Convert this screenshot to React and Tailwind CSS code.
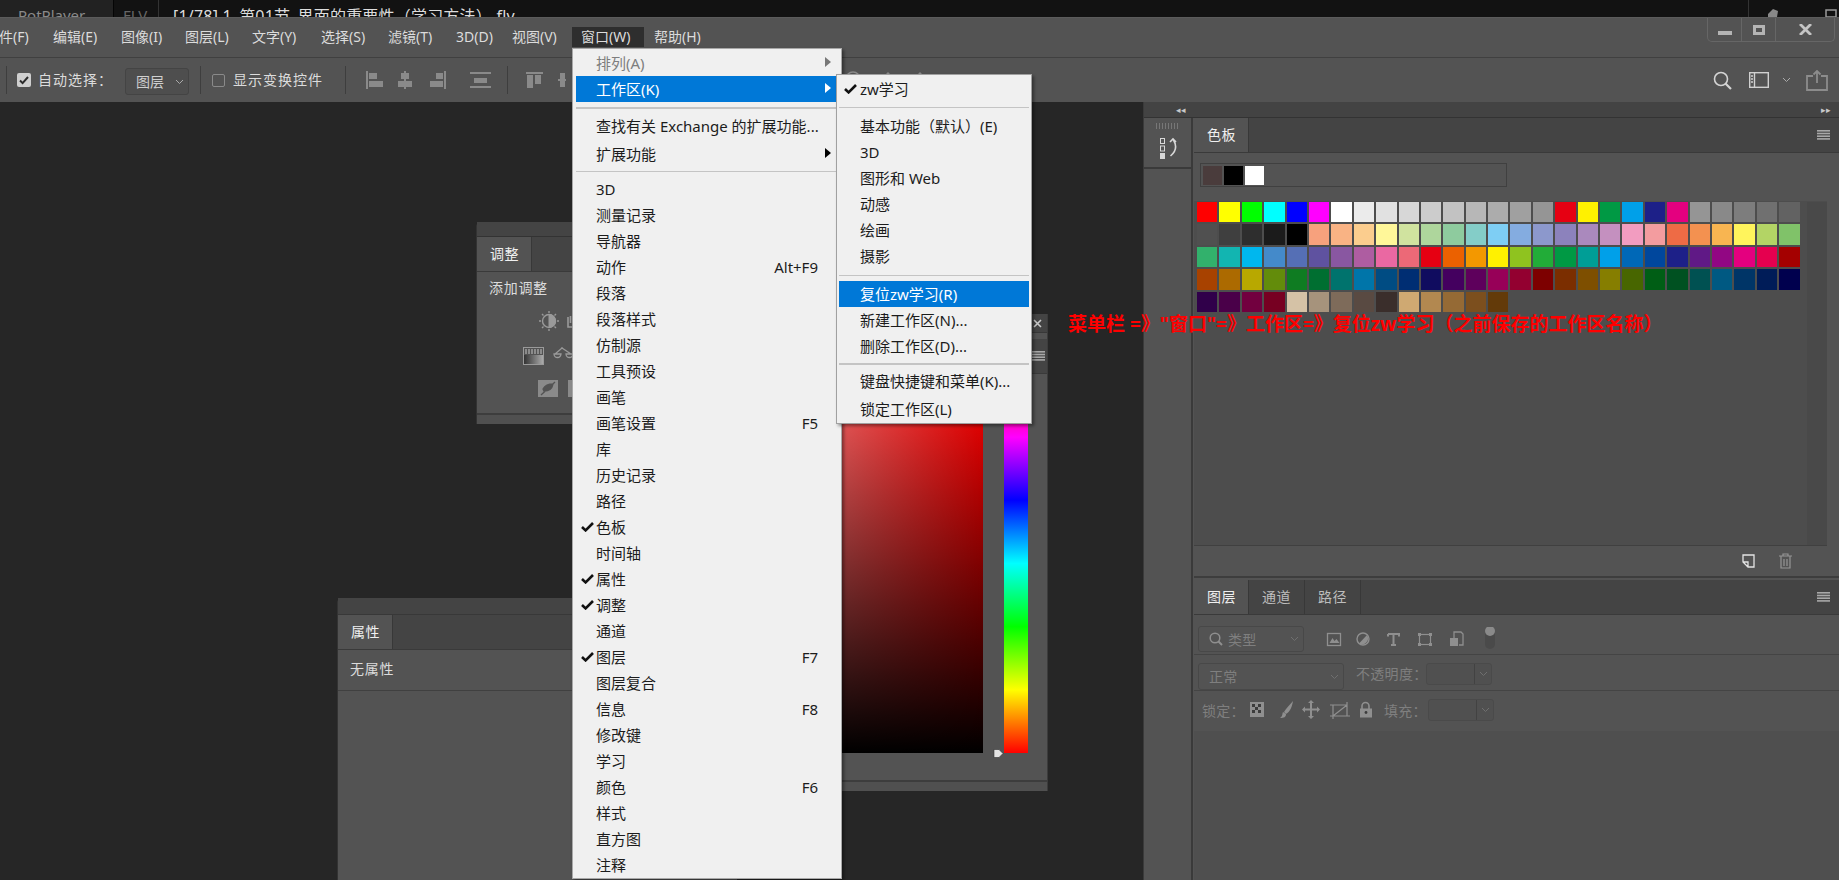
import React from "react";

const menuBar = [
  ["文件(F)", "w-[68px]"], ["编辑(E)", "w-[68px]"], ["图像(I)", "w-[64px]"], ["图层(L)", "w-[67px]"], ["文字(Y)", "w-[69px]"],
  ["选择(S)", "w-[67px]"], ["滤镜(T)", "w-[68px]"], ["3D(D)", "w-[56px]"], ["视图(V)", "w-[60px]"],
];

const swatches = [
  "#ff0000 #ffff00 #00ff00 #00ffff #0000ff #ff00ff #ffffff #ebebeb #e1e1e1 #d7d7d7 #cccccc #c2c2c2 #b7b7b7 #acacac #a0a0a0 #959595 #e60012 #fff100 #009944 #00a0e9 #1d2088 #e4007f #959595 #898989 #7d7d7d #707070 #626262",
  "#505050 #3f3f3f #2e2e2e #1b1b1b #000000 #f7a17d #f9b384 #fbcd8e #fff799 #d0e39f #aed69c #8ecb9e #84cdc8 #7ecef4 #84ace0 #8c98cc #8c82bc #aa89bd #c490bf #f29cc0 #f39c9f #ee6b45 #f39150 #f8b551 #fff45c #b3d465 #80c269",
  "#32b16c #12b5b1 #00b7ee #448aca #556fb5 #5f52a0 #8957a1 #ae5da1 #ea68a2 #ec6977 #e60012 #eb6100 #f39800 #fff100 #8fc31f #22ac38 #009944 #009e96 #00a0e9 #0068b7 #00479d #1d2088 #601986 #920783 #e4007f #e5004f #a40000",
  "#a84200 #ac6a00 #b8a800 #638c0b #0f7c22 #006f31 #00736d #0075a9 #004c83 #002e73 #100c5f #44005f #5e005c #970058 #930030 #7d0000 #7b2e00 #7e4f00 #867e00 #486600 #005e15 #005121 #005152 #005982 #003567 #001c58 #00004e",
  "#30004a #4a0049 #72003f #770022 #d5c2a6 #a6937c #7e6b5a #594a42 #3a2e2b #cfa972 #b28850 #956a35 #7c4f1e #633a09",
];

const Bars = ({ className = "" }) => (
  <svg width="13" height="10" viewBox="0 0 13 10" className={className} fill="#a8a8a8">
    <rect y="0" width="13" height="1.6" /><rect y="2.7" width="13" height="1.6" /><rect y="5.4" width="13" height="1.6" /><rect y="8.1" width="13" height="1.6" />
  </svg>
);

const Chevron = ({ className = "", color = "#aaa" }) => (
  <svg width="9" height="6" viewBox="0 0 9 6" className={className} fill="none" stroke={color}><path d="M1 1l3.5 3.5L8 1" /></svg>
);

const Check = ({ className = "" }) => (
  <svg width="13" height="10" viewBox="0 0 13 10" className={className} fill="none" stroke="#111" strokeWidth="2.6"><path d="M1 5l3.6 3.4L12 1" /></svg>
);

const Tab = ({ children, active, w = "w-[55px]" }) => (
  <div className={`${w} h-full flex items-center pl-[13px] pb-[1px] text-[14px] tracking-[0.5px] border-r border-[#383838] ${active ? "bg-[#535353] text-[#f0f0f0]" : "bg-[#444444] text-[#bdbdbd]"}`}>{children}</div>
);

const Row = ({ label, shortcut, check, arrow, active, disabled, pad = "pl-[20px]" }) => (
  <div className={`relative h-[26px] flex items-center ${pad} pr-[20px] text-[15px] leading-[26px] ${active ? "bg-[#0078d7] text-white" : disabled ? "text-[#7e7e7e]" : "text-[#1c1c1c]"}`}>
    {check && <Check className="absolute left-[5px] top-[8px]" />}
    <span className="whitespace-nowrap">{label}</span>
    {shortcut && <span className="ml-auto">{shortcut}</span>}
    {arrow && <span className={`absolute right-[7px] top-[7px] w-0 h-0 border-y-[5.5px] border-y-transparent border-l-[6px] ${active ? "border-l-white" : disabled ? "border-l-[#777]" : "border-l-black"}`} />}
  </div>
);

const Sep = ({ h = "h-[12px]", line = "h-[1px]" }) => (
  <div className={`${h} flex items-center`}><div className={`w-full ${line} bg-[#c4c4c4]`} /></div>
);

const winItems = [
  ["3D"], ["测量记录"], ["导航器"], ["动作", "Alt+F9"], ["段落"], ["段落样式"], ["仿制源"], ["工具预设"], ["画笔"], ["画笔设置", "F5"], ["库"], ["历史记录"], ["路径"],
  ["色板", null, true], ["时间轴"], ["属性", null, true], ["调整", null, true], ["通道"], ["图层", "F7", true], ["图层复合"], ["信息", "F8"], ["修改键"], ["学习"], ["颜色", "F6"], ["样式"], ["直方图"], ["注释"],
];

const AlignIcons = () => (
  <svg width="570" height="22" viewBox="0 0 570 22" fill="#8a8a8a" className="shrink-0">
    <rect x="0" y="2" width="2" height="18" /><rect x="3" y="4" width="8" height="6" /><rect x="3" y="12" width="14" height="6" />
    <rect x="38" y="2" width="2" height="18" /><rect x="35" y="4" width="8" height="6" /><rect x="32" y="12" width="14" height="6" />
    <rect x="78" y="2" width="2" height="18" /><rect x="70" y="4" width="7" height="6" /><rect x="64" y="12" width="13" height="6" />
    <rect x="104" y="3" width="21" height="2" /><rect x="108" y="9" width="13" height="5" /><rect x="104" y="17" width="21" height="2" />
    <rect x="160" y="3" width="17" height="2" /><rect x="161" y="6" width="6" height="13" /><rect x="169" y="6" width="6" height="9" />
    <rect x="192" y="10" width="8" height="2" /><rect x="194" y="4" width="5" height="14" />
    <circle cx="487" cy="10" r="7" fill="none" stroke="#8a8a8a" strokeWidth="1.5" />
    <path d="M522 3l3 3v10h-6V6z" /><path d="M554 3l3 3v10h-6V6z" />
  </svg>
);

const AdjustIcons = () => (
  <div className="absolute left-[60px] top-[89px] w-[100px] h-[90px]">
    <svg width="100" height="90" viewBox="0 0 100 90" fill="none" stroke="#9a9a9a" className="overflow-visible">
      <defs>
        <linearGradient id="blk" x1="0" x2="1" y1="0" y2="0"><stop offset="0" stopColor="#333" /><stop offset="1" stopColor="#aaa" /></linearGradient>
      </defs>
      <circle cx="12" cy="10" r="6.5" strokeWidth="1.4" />
      <path d="M12 3.5a6.5 6.5 0 010 13z" fill="#9a9a9a" />
      <path d="M12 0v2M12 18v2M2 10h2M20 10h2M5 3l1.5 1.5M19 3l-1.5 1.5M5 17l1.5-1.5M19 17l-1.5-1.5" strokeWidth="1.4" />
      <path d="M31 6v10h8V8h-1.5v4M33.5 5v7M36 5v7" strokeWidth="1.6" />
      <rect x="-13.5" y="36.5" width="20" height="17" strokeWidth="1" />
      <rect x="-13" y="44" width="19" height="9" fill="url(#blk)" stroke="none" />
      <path d="M-11 38v5M-8 38v5M-5 38v5M-2 38v5M1 38v5M4 38v5" strokeWidth="1.6" />
      <path d="M18 43l7-6 9 6M25 36v1M17 43a3.5 3.5 0 007 0zM29 43a3.5 3.5 0 007 0z" strokeWidth="1.3" />
      <rect x="1" y="69" width="20" height="17" fill="#8a8a8a" stroke="none" />
      <path d="M4 84L18 71M6 78c3-5 7-5 10-5-1 5-4 7-9 7z" stroke="#535353" strokeWidth="1.3" fill="#535353" />
      <rect x="31" y="69" width="10" height="17" fill="#8a8a8a" stroke="none" />
    </svg>
  </div>
);

const LayerIcons = () => (
  <svg width="170" height="24" viewBox="0 0 170 24" fill="none" stroke="#8f8f8f" className="shrink-0">
    <rect x="1.5" y="6.5" width="13" height="12" strokeWidth="1.3" />
    <path d="M3.5 16l3-5 2 3 2-2 3 4z" fill="#8f8f8f" stroke="none" />
    <circle cx="37" cy="12" r="6" strokeWidth="1.4" />
    <path d="M33 16.5L41 8a6 6 0 01-8 8.5z" fill="#8f8f8f" stroke="none" />
    <path d="M62 7h11v2.5M67.5 7v11M65 18h5M62 9.5V7" strokeWidth="2" />
    <rect x="93.5" y="7.5" width="11" height="10" strokeWidth="1.2" />
    <path d="M92 6h3v3h-3zM103 6h3v3h-3zM92 16h3v3h-3zM103 16h3v3h-3z" fill="#8f8f8f" stroke="none" />
    <path d="M128 11V5h7l2 2v11h-4" strokeWidth="1.3" />
    <rect x="124" y="11" width="8" height="8" fill="#8f8f8f" stroke="none" />
    <rect x="159" y="0" width="10" height="22" rx="5" fill="#4a4a4a" stroke="none" />
    <circle cx="164" cy="4" r="5" fill="#8a8a8a" stroke="none" />
  </svg>
);

const LockIcons = () => (
  <svg width="126" height="20" viewBox="0 0 126 20" fill="none" stroke="#8f8f8f" className="shrink-0">
    <rect x="1" y="2" width="14" height="15" fill="#8f8f8f" stroke="none" />
    <path d="M3 4h3v3H3zM9 4h3v3H9zM6 7h3v3H6zM3 10h3v3H3zM9 10h3v3H9z" fill="#3c3c3c" stroke="none" />
    <path d="M44 1c-3 4-7 7-9 11l2 2c4-2 6-7 7-13z" fill="#8f8f8f" stroke="none" />
    <path d="M34 12c-1 2 0 4-3 6 4 0 6-1 6-4z" fill="#8f8f8f" stroke="none" />
    <path d="M62 2v15M54.5 9.5h15" strokeWidth="2" />
    <path d="M62 0l3 3h-6zM62 19l3-3h-6zM53 9.5l3-3v6zM71 9.5l-3-3v6z" fill="#8f8f8f" stroke="none" />
    <path d="M84 5h14v11H84zM98 5l-14 11M81 5h3M81 16h3M98 2v3M98 16h3M84 16v3" strokeWidth="1.2" />
    <path d="M113 9V6a3.5 3.5 0 017 0v3" strokeWidth="1.6" />
    <rect x="111" y="8.5" width="12" height="9" fill="#8f8f8f" stroke="none" />
    <circle cx="117" cy="12.5" r="1.4" fill="#3c3c3c" stroke="none" />
  </svg>
);

const ValueBox = () => (
  <div className="w-[66px] h-[22px] flex border border-[#4a4a4a] rounded-[3px] bg-[#505050]">
    <div className="w-[48px] border-r border-[#424242]" />
    <div className="flex-1 flex items-center justify-center"><Chevron color="#6f6f6f" /></div>
  </div>
);

export default function App() {
  return (
    <div className="relative w-[1839px] h-[880px] overflow-hidden flex flex-col bg-[#535353] font-['Noto_Sans','Noto_Sans_CJK_SC',sans-serif]">
      {/* Player title strip */}
      <div className="h-[17px] bg-[#121212] flex overflow-hidden shrink-0">
        <div className="w-[114px] h-full bg-[#222222] border-r border-[#050505] pl-[18px] pt-[5px] text-[15px] leading-[20px] text-[#8a8a8a] whitespace-nowrap">PotPlayer <span className="text-[11px]">⌄</span></div>
        <div className="w-[45px] pl-[9px] pt-[5px] text-[15px] leading-[20px] text-[#666] border-r border-[#333] h-[17px]">FLV</div>
        <div className="pl-[14px] pt-[6px] text-[16px] leading-[20px] tracking-[0.2px] text-[#dddddd] whitespace-nowrap">[1/78] 1_第01节_界面的重要性（学习方法）.flv</div>
        <div className="ml-auto w-[91px] border-l border-[#333] relative h-[17px]">
          <svg width="91" height="17" viewBox="0 0 91 17" className="absolute left-0 top-0" fill="#888">
            <path d="M19 14l5-5 5 2-1 6h-9z" />
            <path d="M77 10h10v7H77z" fill="none" stroke="#999" strokeWidth="1.5" />
          </svg>
        </div>
      </div>

      {/* Menu bar */}
      <div className="h-[41px] shrink-0 border-b border-[#404040] border-t border-t-[#5b5b5b] flex text-[14px] text-[#dcdcdc] pl-0">
        <div className="flex items-center h-[36px] -ml-[15px]">
          {menuBar.map(([t, w]) => <div key={t} className={`${w} whitespace-nowrap`}>{t}</div>)}
        </div>
        <div className="w-[72px] h-[20px] mt-[9px] bg-[#2e2e2e] pl-[9px] leading-[20px] whitespace-nowrap">窗口(W)</div>
        <div className="ml-[10px] h-[36px] flex items-center whitespace-nowrap">帮助(H)</div>
        <div className="ml-auto mr-[4px] w-[128px] h-[24px] flex border border-t-0 border-[#666666] rounded-b-[5px]">
          <div className="w-[34px] border-r border-[#666666] flex items-end justify-center pb-[6px]"><div className="w-[14px] h-[4px] bg-[#b4b4b4]" /></div>
          <div className="w-[34px] border-r border-[#666666] flex items-center justify-center"><div className="w-[12px] h-[10px] border-[3px] border-[#b4b4b4]" /></div>
          <div className="flex-1 flex items-center justify-center">
            <svg width="13" height="11" viewBox="0 0 13 11" stroke="#c4c4c4" strokeWidth="2.8"><path d="M1 0l11 11M12 0L1 11" /></svg>
          </div>
        </div>
      </div>

      {/* Options bar */}
      <div className="h-[44px] shrink-0 flex items-center text-[14px] text-[#dcdcdc] relative">
        <div className="ml-[6px] w-[1px] h-[28px] bg-[#3e3e3e]" />
        <div className="ml-[10px] w-[14px] h-[14px] rounded-[2px] bg-[#cfcfcf] flex items-center justify-center">
          <svg width="10" height="9" viewBox="0 0 10 9" fill="none" stroke="#2c2c2c" strokeWidth="2"><path d="M1 4.5l2.6 2.6L9 1" /></svg>
        </div>
        <div className="ml-[7px] mb-[2px] tracking-[1px] whitespace-nowrap">自动选择：</div>
        <div className="ml-[12px] mt-[3px] w-[64px] h-[27px] border border-[#444] rounded-[3px] bg-[#4e4e4e] flex items-center pl-[10px] text-[#cfcfcf] shrink-0">
          图层<Chevron className="ml-auto mr-[4px]" />
        </div>
        <div className="ml-[11px] w-[1px] h-[28px] bg-[#3e3e3e]" />
        <div className="ml-[11px] w-[13px] h-[13px] rounded-[2px] border border-[#8a8a8a]" />
        <div className="ml-[8px] mb-[2px] tracking-[1px] whitespace-nowrap">显示变换控件</div>
        <div className="ml-[22px] w-[1px] h-[28px] bg-[#3e3e3e]" />
        <div className="ml-[20px]"><AlignIcons /></div>
        <div className="absolute left-[507px] top-[8px] w-[1px] h-[28px] bg-[#3e3e3e]" />
        <div className="ml-auto mr-[11px] flex items-center">
          <svg width="19" height="19" viewBox="0 0 19 19" fill="none" stroke="#d4d4d4" strokeWidth="1.6"><circle cx="8" cy="8" r="6.5" /><path d="M12.5 12.5L18 18" strokeWidth="2.2" /></svg>
          <svg width="20" height="16" viewBox="0 0 20 16" fill="none" stroke="#d0d0d0" strokeWidth="1.4" className="ml-[17px]"><rect x="0.7" y="0.7" width="18.6" height="14.6" /><path d="M5.5 1v14" /><path d="M2 4h2M2 7h2M2 10h2" /></svg>
          <Chevron className="ml-[13px]" />
          <svg width="22" height="21" viewBox="0 0 22 21" fill="none" stroke="#8c8c8c" strokeWidth="1.8" className="ml-[15px]"><path d="M7 6H1v14h20V6h-6" /><path d="M11 13V1M7.5 4.5L11 1l3.5 3.5" /></svg>
        </div>
      </div>

      {/* Work area */}
      <div className="flex-1 flex min-h-0">
        {/* Canvas with floating windows */}
        <div className="relative w-[1143px] shrink-0 bg-[#262626]">
          <div className="absolute left-[476px] top-[120px] w-[300px] h-[202px] bg-[#535353] border-l border-[#333] rounded-tl-[5px] flex flex-col text-[14px]">
            <div className="h-[15px] bg-[#444444] border-b border-[#333]" />
            <div className="h-[35px] bg-[#444444] flex border-b border-[#3a3a3a]"><Tab active>调整</Tab></div>
            <div className="pl-[12px] pt-[5px] text-[#dcdcdc] tracking-[0.7px] leading-[22px]">添加调整</div>
            <AdjustIcons />
            <div className="mt-auto h-[11px] border-t-2 border-[#3d3d3d] bg-[#505050]" />
          </div>

          <div className="absolute left-[337px] top-[496px] w-[400px] h-[300px] bg-[#535353] border-l border-[#333] rounded-tl-[5px] flex flex-col text-[14px]">
            <div className="h-[17px] bg-[#444444] border-b border-[#383838]" />
            <div className="h-[35px] bg-[#444444] flex border-b border-[#3a3a3a]"><Tab active>属性</Tab></div>
            <div className="h-[41px] border-b border-[#404040] pl-[12px] pb-[3px] flex items-center tracking-[0.7px] text-[#dcdcdc]">无属性</div>
          </div>

          <div className="absolute left-[600px] top-[212px] w-[448px] h-[477px] bg-[#535353] flex flex-col border-r border-[#3c3c3c]">
            <div className="h-[19px] bg-[#444444] border-b border-[#383838] flex justify-end items-center pr-[5px]">
              <svg width="9" height="9" viewBox="0 0 9 9" stroke="#c8c8c8" strokeWidth="1.6"><path d="M1 1l7 7M8 1L1 8" /></svg>
            </div>
            <div className="h-[35px] mt-[6px] bg-[#444444] border-b border-[#3a3a3a] flex items-center justify-end pr-[2px]"><Bars /></div>
            <div className="relative flex-1">
              <div className="absolute left-[4px] top-0 w-[379px] h-[379px] bg-[linear-gradient(to_bottom,transparent,#000),linear-gradient(to_right,#fff,#f00)]" />
              <div className="absolute left-[404px] top-0 w-[24px] h-[379px] bg-[linear-gradient(to_bottom,#f00,#f0f,#00f,#0ff,#0f0,#ff0,#f00)]" />
              <svg width="11" height="11" viewBox="0 0 11 11" className="absolute left-[393px] top-[374px]"><path d="M1 1.5h5l4 4-4 4H1z" fill="#e4e4e4" stroke="#333" strokeWidth="0.6" /></svg>
            </div>
            <div className="h-[11px] border-t-2 border-[#3d3d3d] bg-[#505050]" />
          </div>
        </div>

        {/* Dock */}
        <div className="flex-1 flex flex-col min-w-0 border-l border-[#3a3a3a]">
          <div className="h-[16px] shrink-0 bg-[#434343] border-b border-[#333] flex items-center justify-between pl-[32px] pr-[8px]">
            <span className="text-[9px] leading-none text-[#c8c8c8]">◂◂</span>
            <span className="text-[9px] leading-none text-[#c8c8c8]">▸▸</span>
          </div>
          <div className="flex-1 flex min-h-0">
            <div className="w-[49px] shrink-0 border-r-2 border-[#3a3a3a]">
              <div className="h-[51px] border-b-2 border-[#3a3a3a] flex flex-col items-center pt-[5px]">
                <div className="w-[24px] h-[6px] bg-[repeating-linear-gradient(to_right,#777_0,#777_1px,transparent_1px,transparent_3px)]" />
                <svg width="20" height="22" viewBox="0 0 20 22" className="mt-[8px] ml-[3px]" fill="none" stroke="#d8d8d8">
                  <rect x="1.5" y="1.5" width="4" height="5" /><rect x="1.5" y="9" width="4" height="5" />
                  <rect x="1" y="16" width="5" height="6" fill="#d8d8d8" stroke="none" />
                  <path d="M11 5l3-3 3 3M14.5 3c3 5 3 11-3 16" strokeWidth="1.6" />
                </svg>
              </div>
            </div>

            <div className="flex-1 min-w-0 flex flex-col pl-[1px]">
              {/* Swatches panel */}
              <div className="h-[460px] shrink-0 flex flex-col border-b-2 border-[#3d3d3d]">
                <div className="h-[35px] shrink-0 bg-[#444444] border-b border-[#3a3a3a] flex items-center pr-[9px]">
                  <Tab active>色板</Tab>
                  <Bars className="ml-auto" />
                </div>
                <div className="h-[48px] shrink-0 pl-[6px] pt-[10px]">
                  <div className="w-[307px] h-[24px] border border-[#404040] flex items-center gap-[2px] pl-[2px]">
                    <div className="w-[19px] h-[19px] bg-[#4a3c3c]" />
                    <div className="w-[19px] h-[19px] bg-black" />
                    <div className="w-[19px] h-[19px] bg-white" />
                  </div>
                </div>
                <div className="flex-1 min-h-0 mr-[12px] flex bg-[#4d4d4d] border-b border-[#404040] pt-[1px]">
                  <div className="flex-1 pl-[3px] grid grid-cols-[repeat(27,20.4px)] auto-rows-[20.4px] gap-[2px] content-start">
                    {swatches.flatMap((row, r) => row.split(" ").map((c, i) => (
                      <div key={r + "-" + i} style={{ backgroundColor: c }} />
                    )))}
                  </div>
                  <div className="w-[20px] bg-[#494949]" />
                </div>
                <div className="h-[30px] shrink-0 flex items-center justify-end gap-[24px] pr-[47px]">
                  <svg width="13" height="14" viewBox="0 0 13 14" fill="none" stroke="#e4e4e4" strokeWidth="1.3"><path d="M1 1h11v12H6L1 8zM1 8h5v5" /></svg>
                  <svg width="13" height="16" viewBox="0 0 13 16" fill="none" stroke="#959595" strokeWidth="1.2"><path d="M0 3h13M4 3V1h5v2M2 3v12h9V3M5 6v7M8 6v7" /></svg>
                </div>
              </div>

              {/* Layers panel */}
              <div className="flex-1 mt-[2px] flex flex-col bg-[#4f4f4f] min-h-0">
                <div className="h-[35px] shrink-0 bg-[#444444] border-b border-[#3a3a3a] flex items-center pr-[9px]">
                  <Tab active>图层</Tab><Tab w="w-[56px]">通道</Tab><Tab w="w-[56px]">路径</Tab>
                  <Bars className="ml-auto" />
                </div>
                <div className="bg-[#535353] flex flex-col text-[14px] text-[#7f7f7f]">
                  <div className="h-[40px] border-b border-[#444] flex items-start pt-[11px] pl-[4px]">
                    <div className="w-[106px] h-[26px] border border-[#484848] rounded-[3px] flex items-center pl-[10px] shrink-0">
                      <svg width="14" height="14" viewBox="0 0 14 14" fill="none" stroke="#8f8f8f" strokeWidth="1.5"><circle cx="6" cy="6" r="4.8" /><path d="M9.5 9.5L13 13" strokeWidth="2" /></svg>
                      <span className="ml-[5px] tracking-[0.3px]">类型</span>
                      <Chevron className="ml-auto mr-[4px]" color="#6f6f6f" />
                    </div>
                    <div className="ml-[22px] mt-[1px]"><LayerIcons /></div>
                  </div>
                  <div className="h-[36px] border-b border-[#444] flex items-start pt-[8px] pl-[4px]">
                    <div className="w-[146px] h-[27px] border border-[#484848] rounded-[3px] flex items-center pl-[10px] shrink-0 tracking-[0.3px]">
                      正常<Chevron className="ml-auto mr-[4px]" color="#6f6f6f" />
                    </div>
                    <span className="ml-[12px] w-[70px] whitespace-nowrap tracking-[0.3px]">不透明度：</span>
                    <ValueBox />
                  </div>
                  <div className="h-[40px] flex items-center pb-[2px] pl-[8px]">
                    <span className="w-[47px] whitespace-nowrap tracking-[0.3px]">锁定：</span>
                    <LockIcons />
                    <span className="ml-[9px] w-[44px] whitespace-nowrap tracking-[0.3px]">填充：</span>
                    <ValueBox />
                  </div>
                </div>
              </div>
            </div>
          </div>
        </div>
      </div>

      {/* Annotation */}
      <div className="absolute left-[1068px] top-[312px] text-[19px] leading-[24px] font-bold text-[#ff0000] whitespace-nowrap">菜单栏 =》"窗口"=》工作区=》复位zw学习（之前保存的工作区名称）</div>

      {/* Window menu */}
      <div className="absolute left-[572px] top-[48px] w-[270px] bg-[#f0f0f0] border border-[#a8a8a8] pt-[1px] px-[3px] shadow-[2px_2px_3px_rgba(0,0,0,0.4)]">
        <Row label="排列(A)" arrow disabled />
        <Row label="工作区(K)" arrow active />
        <Sep h="h-[11px]" line="h-[2px]" />
        <Row label="查找有关 Exchange 的扩展功能..." />
        <div className="h-[2px]" />
        <Row label="扩展功能" arrow />
        <Sep h="h-[9px]" />
        {winItems.map(([label, sc, ck]) => <Row key={label} label={label} shortcut={sc} check={ck} />)}
      </div>

      {/* Workspace submenu */}
      <div className="absolute left-[836px] top-[74px] w-[196px] bg-[#f0f0f0] border border-[#a0a0a0] pt-[1px] pb-[1px] px-[2px] shadow-[2px_2px_3px_rgba(0,0,0,0.4)]">
        <Row label="zw学习" check pad="pl-[21px]" />
        <Sep h="h-[11px]" />
        {["基本功能（默认）(E)", "3D", "图形和 Web", "动感", "绘画", "摄影"].map((t) => <Row key={t} label={t} pad="pl-[21px]" />)}
        <Sep />
        <Row label="复位zw学习(R)" active pad="pl-[21px]" />
        <Row label="新建工作区(N)..." pad="pl-[21px]" />
        <Row label="删除工作区(D)..." pad="pl-[21px]" />
        <Sep h="h-[9px]" line="h-[2px]" />
        <Row label="键盘快捷键和菜单(K)..." pad="pl-[21px]" />
        <div className="h-[2px]" />
        <Row label="锁定工作区(L)" pad="pl-[21px]" />
      </div>
    </div>
  );
}
